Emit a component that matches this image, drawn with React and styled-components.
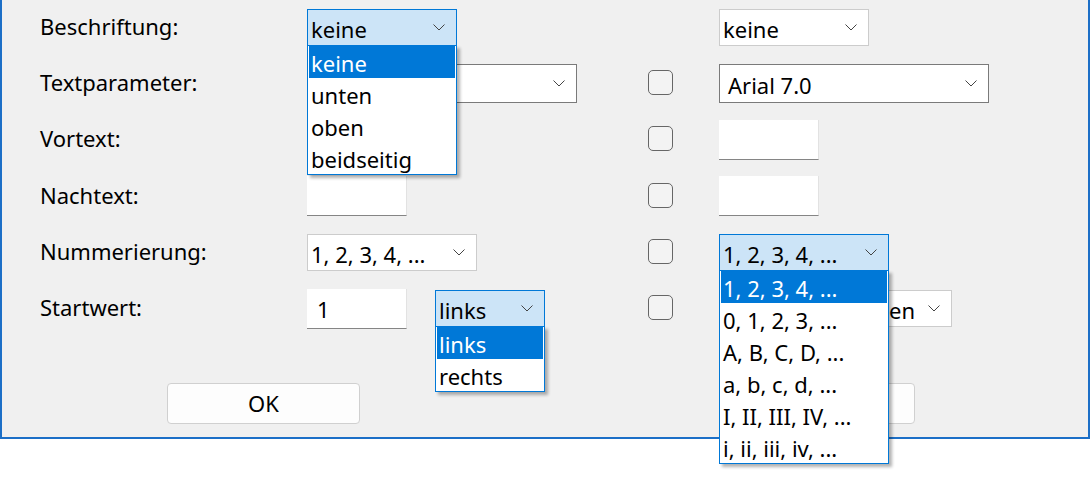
import React from 'react'
import styled, { createGlobalStyle, css } from 'styled-components'

const GlobalStyle = createGlobalStyle`
  html, body {
    margin: 0;
    background: #ffffff;
  }
  body {
    font-family: "Noto Sans", "Open Sans", sans-serif;
    font-size: 22px;
    color: #000;
  }
`

const Page = styled.div`
  height: 498px;
  position: relative;
`

const Dialog = styled.div`
  width: 1086px;
  height: 437px;
  background: #f0f0f0;
  border: 2px solid #1c6fc7;
  border-top: none;
  box-sizing: content-box;
  display: flex;
  flex-direction: column;
`

const Form = styled.div`
  display: grid;
  grid-template-columns: 267px 341px 71px 1fr;
  grid-auto-rows: 56.3px;
  align-items: center;
  padding-left: 38px;
  margin-top: -1px;
`

const Label = styled.div`
  line-height: 1;
  padding-bottom: 3px;
`

const Cell = styled.div`
  display: flex;
  align-items: center;
  gap: 28px;
`

const ComboBox = styled.div`
  position: relative;
  box-sizing: border-box;
  width: ${(p) => p.$w}px;
  height: ${(p) => (p.$editable ? 39 : 37)}px;
  display: flex;
  align-items: center;
  justify-content: space-between;
  padding: 0 11px 0 ${(p) => (p.$editable ? 8 : 3)}px;
  background: #fff;
  border: 1px solid ${(p) => (p.$editable ? '#7a7a7a' : '#cccccc')};
  white-space: nowrap;
  ${(p) =>
    p.$open &&
    css`
      z-index: 10;
      background: #cce4f7;
      border-color: #0078d7;
    `}
`

const ComboText = styled.span`
  line-height: 1;
  padding-top: 3px;
`

const Chevron = () => (
  <svg width="12" height="7" viewBox="0 0 12 7">
    <polyline points="0.5,0.5 6,6 11.5,0.5" fill="none" stroke="#444" strokeWidth="1" />
  </svg>
)

const List = styled.div`
  position: absolute;
  top: 100%;
  left: -1px;
  right: -1px;
  background: #fff;
  border: 1px solid #0078d7;
  padding: 0 1px;
  box-shadow: 3px 3px 3px rgba(0, 0, 0, 0.3);
`

const Item = styled.div`
  height: 32px;
  line-height: 34px;
  padding-left: 2px;
  white-space: nowrap;
  ${(p) =>
    p.$selected &&
    css`
      background: #0078d7;
      color: #fff;
    `}
`

const TextBox = styled.div`
  box-sizing: border-box;
  width: 100px;
  height: 40px;
  background: #fff;
  border-right: 1px solid #e2e2e2;
  border-bottom: 1px solid #858585;
  padding: 6px 0 0 10px;
  line-height: 1.3;
`

const CheckBox = styled.div`
  box-sizing: border-box;
  width: 25px;
  height: 25px;
  border: 1.5px solid #666;
  border-radius: 5px;
  background: #f3f3f3;
  margin-bottom: 2px;
`

const Buttons = styled.div`
  display: flex;
  gap: 362px;
  padding: 46px 0 0 165px;
`

const Button = styled.div`
  box-sizing: border-box;
  width: 193px;
  height: 41px;
  background: #fdfdfd;
  border: 1px solid #d0d0d0;
  border-radius: 4px;
  display: flex;
  align-items: center;
  justify-content: center;
`

const Combo = ({ value, w, editable, open, options }) => (
  <ComboBox $w={w} $editable={editable} $open={open}>
    <ComboText>{value}</ComboText>
    <Chevron />
    {open && (
      <List>
        {options.map((o) => (
          <Item key={o} $selected={o === value}>
            {o}
          </Item>
        ))}
      </List>
    )}
  </ComboBox>
)

const numbering = [
  '1, 2, 3, 4, ...',
  '0, 1, 2, 3, ...',
  'A, B, C, D, ...',
  'a, b, c, d, ...',
  'I, II, III, IV, ...',
  'i, ii, iii, iv, ...',
]

export default function App() {
  return (
    <Page>
      <GlobalStyle />
      <Dialog>
        <Form>
          <Label>Beschriftung:</Label>
          <Cell>
            <Combo value="keine" w={150} open options={['keine', 'unten', 'oben', 'beidseitig']} />
          </Cell>
          <div />
          <Cell>
            <Combo value="keine" w={150} />
          </Cell>

          <Label>Textparameter:</Label>
          <Cell>
            <Combo value="Arial 7.0" w={270} editable />
          </Cell>
          <CheckBox />
          <Cell>
            <Combo value="Arial 7.0" w={270} editable />
          </Cell>

          <Label>Vortext:</Label>
          <Cell>
            <TextBox />
          </Cell>
          <CheckBox />
          <Cell>
            <TextBox />
          </Cell>

          <Label>Nachtext:</Label>
          <Cell>
            <TextBox />
          </Cell>
          <CheckBox />
          <Cell>
            <TextBox />
          </Cell>

          <Label>Nummerierung:</Label>
          <Cell>
            <Combo value="1, 2, 3, 4, ..." w={170} />
          </Cell>
          <CheckBox />
          <Cell>
            <Combo value="1, 2, 3, 4, ..." w={170} open options={numbering} />
          </Cell>

          <Label>Startwert:</Label>
          <Cell>
            <TextBox>1</TextBox>
            <Combo value="links" w={110} open options={['links', 'rechts']} />
          </Cell>
          <CheckBox />
          <Cell>
            <Combo value="nach allen Zeichen" w={233} />
          </Cell>
        </Form>
        <Buttons>
          <Button>OK</Button>
          <Button>Abbrechen</Button>
        </Buttons>
      </Dialog>
    </Page>
  )
}
